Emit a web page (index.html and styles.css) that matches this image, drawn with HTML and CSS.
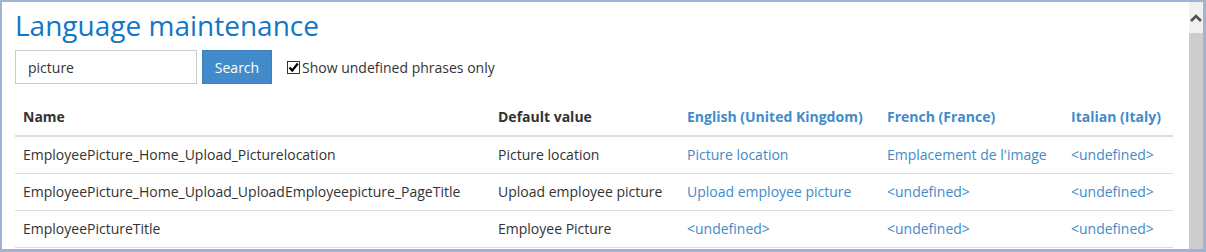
FILE: index.html
```html
<!DOCTYPE html>
<html>
<head>
<meta charset="utf-8">
<link rel="stylesheet" href="styles.css">
</head>
<body>
<div class="frame">
  <div class="main">
    <h1 class="title">Language maintenance</h1>
    <div class="search-row">
      <input class="search-input" type="text" value="picture">
      <button class="search-btn">Search</button>
      <label class="check-label"><span class="checkbox"><svg width="11" height="11" viewBox="0 0 11 11"><path d="M1.5 5.5 L4.3 8.5 L9.8 1.5" fill="none" stroke="#000" stroke-width="2.2"/></svg></span>Show undefined phrases only</label>
    </div>
    <table class="grid">
      <thead>
        <tr>
          <th class="c-name">Name</th>
          <th class="c-def">Default value</th>
          <th class="c-en lang">English (United Kingdom)</th>
          <th class="c-fr lang">French (France)</th>
          <th class="c-it lang">Italian (Italy)</th>
        </tr>
      </thead>
      <tbody>
        <tr>
          <td>EmployeePicture_Home_Upload_Picturelocation</td>
          <td>Picture location</td>
          <td class="link">Picture location</td>
          <td class="link">Emplacement de l'image</td>
          <td class="link">&lt;undefined&gt;</td>
        </tr>
        <tr>
          <td>EmployeePicture_Home_Upload_UploadEmployeepicture_PageTitle</td>
          <td>Upload employee picture</td>
          <td class="link">Upload employee picture</td>
          <td class="link">&lt;undefined&gt;</td>
          <td class="link">&lt;undefined&gt;</td>
        </tr>
        <tr>
          <td>EmployeePictureTitle</td>
          <td>Employee Picture</td>
          <td class="link">&lt;undefined&gt;</td>
          <td class="link">&lt;undefined&gt;</td>
          <td class="link">&lt;undefined&gt;</td>
        </tr>
      </tbody>
    </table>
  </div>
  <div class="scrollbar">
    <div class="sb-arrow"><svg width="14" height="10" viewBox="0 0 14 10"><path d="M2 8 L7 3 L12 8" fill="none" stroke="#505050" stroke-width="2.6"/></svg></div>
    <div class="sb-thumb"></div>
  </div>
</div>
</body>
</html>
```

FILE: styles.css
```css
html, body {
  margin: 0;
  padding: 0;
  background: #ffffff;
}
body {
  font-family: "Open Sans", "Liberation Sans", sans-serif;
  font-size: 14px;
  color: #333333;
}
.frame {
  box-sizing: border-box;
  width: 1206px;
  height: 252px;
  border-style: solid;
  border-color: #a2b2d2;
  border-width: 2px 3px 3px 2px;
  display: flex;
  overflow: hidden;
}
.main {
  flex: 1;
  padding: 0 0 0 13px;
  min-width: 0;
}
.title {
  margin: 4px 0 0 0;
  font-size: 28px;
  font-weight: 400;
  line-height: 38px;
  color: #1176c8;
}
.search-row {
  display: flex;
  align-items: center;
  margin-top: 6px;
}
.search-input {
  box-sizing: border-box;
  width: 182px;
  height: 34px;
  border: 1px solid #cccccc;
  padding: 0 12px;
  font-family: inherit;
  font-size: 14px;
  color: #333;
  outline: none;
}
.search-btn {
  box-sizing: border-box;
  margin-left: 5px;
  width: 70px;
  height: 34px;
  border: 1px solid #3a80bd;
  background: #428bca;
  color: #ffffff;
  font-family: inherit;
  font-size: 14px;
  padding: 0;
}
.check-label {
  display: flex;
  align-items: center;
  margin-left: 15px;
  font-size: 14px;
  color: #333;
}
.checkbox {
  box-sizing: border-box;
  width: 13px;
  height: 13px;
  border: 1px solid #333;
  display: flex;
  align-items: center;
  justify-content: center;
  margin-right: 2px;
  background: #fff;
}
.grid {
  margin-top: 15px;
  width: 1158px;
  border-collapse: collapse;
  table-layout: fixed;
}
.grid th, .grid td {
  padding: 8px;
  line-height: 20px;
  text-align: left;
  white-space: nowrap;
}
.grid th {
  font-weight: 700;
  border-bottom: 2px solid #dddddd;
}
.grid td {
  border-bottom: 1px solid #dddddd;
}
.grid th.lang, .grid td.link {
  color: #428bca;
}
.c-name { width: 459px; }
.c-def { width: 173px; }
.c-en { width: 184px; }
.c-fr { width: 168px; }
.c-it { width: 94px; }
.scrollbar {
  width: 14px;
  display: flex;
  flex-direction: column;
}
.sb-arrow {
  height: 31px;
  background: #f0f0f0;
  display: flex;
  align-items: center;
  justify-content: center;
}
.sb-thumb {
  flex: 1;
  background: #cdcdcd;
}
```
